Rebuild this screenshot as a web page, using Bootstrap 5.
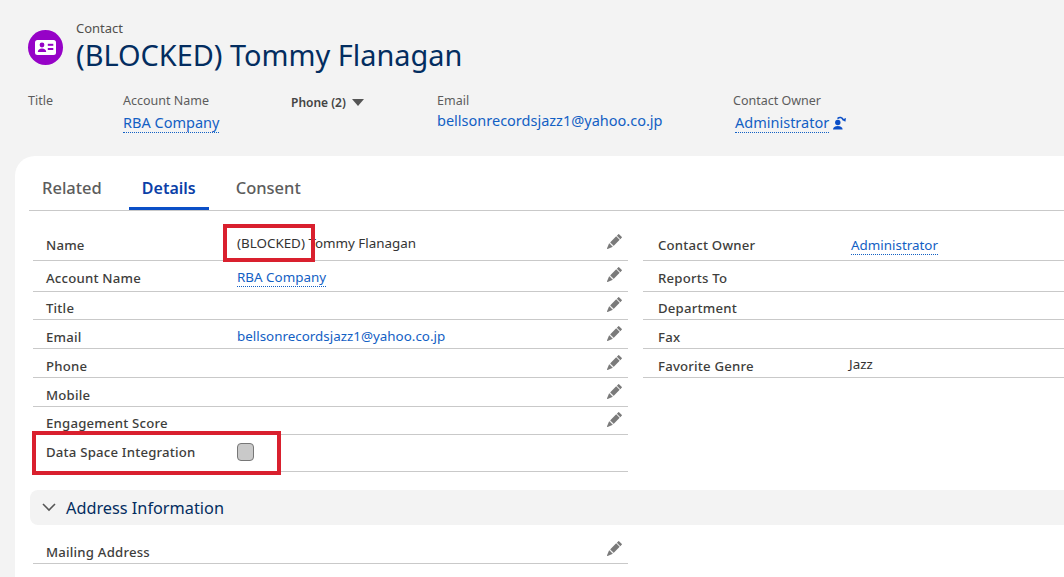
<!doctype html>
<html lang="en">
<head>
  <meta charset="utf-8">
  <meta name="viewport" content="width=device-width, initial-scale=1">
  <title>Contact | Tommy Flanagan</title>
  <link href="https://cdn.jsdelivr.net/npm/bootstrap@5.3.3/dist/css/bootstrap.min.css" rel="stylesheet">
  <style>
    html, body { height: 577px; overflow: hidden; }
    body {
      background: #f3f3f3;
      color: #444;
      font-family: "Noto Sans", "Open Sans", sans-serif;
      font-size: 13px;
      position: relative;
    }
    a.sf-link { color: #1260c4; text-decoration: none; }
    a.sf-dotted { border-bottom: 1px dotted #1260c4; }

    .page-head { padding: 20px 0 0 28px; height: 156px; }
    .obj-icon { width: 35px; height: 35px; background: #9602c7; margin-top: 10px; margin-right: 13px; }
    .obj-type { font-size: 13px; line-height: 17px; color: #514f4d; }
    .obj-title { font-size: 28.9px; line-height: 36px; color: #032d60; font-weight: 400; margin: 0; }

    .hl-row { margin-top: 20px; }
    .hl-label { font-size: 12.5px; line-height: 16px; color: #5c5c5c; }
    .hl-value { font-size: 14.5px; line-height: 20px; margin-top: 3px; }
    .hl-title { width: 95px; }
    .hl-acct { width: 168px; }
    .hl-phone { width: 146px; font-size: 12px; font-weight: 600; line-height: 20px; color: #444; }
    .hl-mail { width: 296px; }
    .hl-mail .hl-value { margin-top: 1px; }
    .hl-owner .hl-value { margin-left: 2px; margin-top: 3px; gap: 4px; }
    .caret-down { display: inline-block; border: 6px solid transparent; border-top: 7px solid #555; border-bottom: 0; margin-left: 3px; vertical-align: 1px; }

    .main-panel { background: #fff; margin-left: 15px; height: 421px; padding-left: 14px; border-top-left-radius: 20px; }
    .tab-bar { height: 55px; border-bottom: 1px solid #c9c9c9; gap: 14px; padding-top: 15px; }
    .tab-bar .nav-link { color: #5c5c5c; font-size: 16.5px; font-weight: 500; padding: 5px 13px 0; height: 39px; line-height: 24px; }
    .tab-bar .nav-link.active { color: #0b3fa8; border-bottom: 3px solid #0b4fc7; font-size: 16px; font-weight: 600; }

    .field-cols { margin-top: 15px; }
    .field-left { width: 595px; margin-left: 4px; }
    .field-right { width: 421px; margin-left: 15px; }
    .fld { border-bottom: 1px solid #c9c9c9; align-items: flex-end; padding-left: 13px; padding-bottom: 3px; height: 29px; }
    .fld-tall { height: 35px; padding-bottom: 7px; }
    .fld-mid { height: 31px; padding-bottom: 5px; }
    .fld-short { height: 28px; }
    .fld-end { height: 37px; padding-bottom: 11px; }
    .fld-addr { height: 39px; }
    .fld-label { width: 191px; font-size: 13.2px; font-weight: 500; line-height: 16px; color: #3e3e3c; flex: none; letter-spacing: .2px; }
    .field-right .fld { padding-left: 15px; }
    .field-right .fld-label { width: 193px; }
    .fld-value { line-height: 16px; margin-bottom: 1px; font-size: 13.4px; color: #333; }
    .fld-tall .fld-value { margin-bottom: 2px; }
    .field-right .fld-tall .fld-value { margin-bottom: 0; }
    .fld-jazz { margin-left: -2px; margin-bottom: 2px; }
    .pen { width: 15px; height: 15px; fill: #7a7a7a; margin-left: auto; margin-right: 6px; margin-bottom: 4px; flex: none; }
    .check-box { width: 17px; height: 18px; background: #c9c9c9; border: 1px solid #777; border-radius: 4px; margin-bottom: -1px; }

    .section-bar { background: #f3f3f3; height: 35px; margin: 18px 0 0 1px; border-radius: 8px 0 0 8px; padding-left: 12px; }
    .section-bar span { font-size: 16.3px; color: #032d60; margin-left: 10px; margin-top: 1px; }

    .red-box { position: absolute; border: 4px solid #d9202e; }
    .red-name { left: 223px; top: 224px; width: 92px; height: 38px; }
    .red-data { left: 32px; top: 431px; width: 249px; height: 44px; }
  </style>
</head>
<body>
  <svg width="0" height="0" class="position-absolute">
    <symbol id="pencil" viewBox="0 0 16 16">
      <path d="M12.854.146a.5.5 0 0 0-.707 0L10.500 1.793 14.207 5.500l1.647-1.646a.5.5 0 0 0 0-.708l-3-3zm.646 6.061L9.793 2.500 3.293 9H3.500a.5.5 0 0 1 .5.5v.5h.5a.5.5 0 0 1 .5.5v.5h.5a.5.5 0 0 1 .5.5v.5h.5a.5.5 0 0 1 .5.5v.207l6.500-6.500zm-7.468 7.468A.5.5 0 0 1 6 13.500V13h-.5a.5.5 0 0 1-.5-.5V12h-.5a.5.5 0 0 1-.5-.5V11h-.5a.5.5 0 0 1-.5-.5V10h-.5a.499.499 0 0 1-.175-.032l-.179.178a.5.5 0 0 0-.11.168l-2 5a.5.5 0 0 0 .65.65l5-2a.5.5 0 0 0 .168-.11l.178-.178z"/>
    </symbol>
  </svg>

  <header class="page-head">
    <div class="d-flex">
      <div class="obj-icon rounded-circle d-flex align-items-center justify-content-center flex-shrink-0">
        <svg width="21" height="15" viewBox="0 0 21 15">
          <rect width="21" height="15" rx="2.5" fill="#fff"/>
          <circle cx="7" cy="5" r="2.4" fill="#9602c7"/>
          <path d="M2.800 12c0-2.400 1.800-3.600 4.200-3.600s4.200 1.200 4.200 3.600z" fill="#9602c7"/>
          <rect x="12.800" y="3.800" width="5.500" height="2" fill="#9602c7"/>
          <rect x="12.800" y="8" width="5.500" height="2" fill="#9602c7"/>
        </svg>
      </div>
      <div>
        <div class="obj-type">Contact</div>
        <h1 class="obj-title">(BLOCKED) Tommy Flanagan</h1>
      </div>
    </div>
    <div class="hl-row d-flex">
      <div class="hl-title"><div class="hl-label">Title</div></div>
      <div class="hl-acct">
        <div class="hl-label">Account Name</div>
        <div class="hl-value"><a class="sf-link sf-dotted" href="#">RBA Company</a></div>
      </div>
      <div class="hl-phone">Phone (2) <span class="caret-down"></span></div>
      <div class="hl-mail">
        <div class="hl-label">Email</div>
        <div class="hl-value"><a class="sf-link" href="#">bellsonrecordsjazz1@yahoo.co.jp</a></div>
      </div>
      <div class="hl-owner">
        <div class="hl-label">Contact Owner</div>
        <div class="hl-value d-flex align-items-center">
          <a class="sf-link sf-dotted" href="#">Administrator</a>
          <svg width="13" height="14" viewBox="0 0 13 14">
            <circle cx="4.800" cy="6.500" r="2.700" fill="#0b4fc7"/>
            <path d="M0 13.500c0-2.300 2-3.500 4.800-3.500s4.800 1.200 4.800 3.500z" fill="#0b4fc7"/>
            <path d="M4.500 2.600C6.500.8 9.200 1.200 10.500 4" fill="none" stroke="#0b4fc7" stroke-width="1.500"/>
            <path d="M8.600 3.800l3.800 2 .6-3.800z" fill="#0b4fc7"/>
          </svg>
        </div>
      </div>
    </div>
  </header>

  <main class="main-panel">
    <ul class="nav tab-bar">
      <li class="nav-item"><a class="nav-link" href="#">Related</a></li>
      <li class="nav-item"><a class="nav-link active" href="#">Details</a></li>
      <li class="nav-item"><a class="nav-link" href="#">Consent</a></li>
    </ul>

    <div class="field-cols d-flex">
      <div class="field-left">
        <div class="fld fld-tall d-flex"><div class="fld-label">Name</div><div class="fld-value">(BLOCKED) Tommy Flanagan</div><svg class="pen"><use href="#pencil"/></svg></div>
        <div class="fld fld-mid d-flex"><div class="fld-label">Account Name</div><div class="fld-value"><a class="sf-link sf-dotted" href="#">RBA Company</a></div><svg class="pen"><use href="#pencil"/></svg></div>
        <div class="fld fld-short d-flex"><div class="fld-label">Title</div><svg class="pen"><use href="#pencil"/></svg></div>
        <div class="fld d-flex"><div class="fld-label">Email</div><div class="fld-value"><a class="sf-link" href="#">bellsonrecordsjazz1@yahoo.co.jp</a></div><svg class="pen"><use href="#pencil"/></svg></div>
        <div class="fld d-flex"><div class="fld-label">Phone</div><svg class="pen"><use href="#pencil"/></svg></div>
        <div class="fld d-flex"><div class="fld-label">Mobile</div><svg class="pen"><use href="#pencil"/></svg></div>
        <div class="fld fld-short d-flex"><div class="fld-label">Engagement Score</div><svg class="pen"><use href="#pencil"/></svg></div>
        <div class="fld fld-end d-flex"><div class="fld-label">Data Space Integration</div><div class="check-box"></div></div>
      </div>
      <div class="field-right">
        <div class="fld fld-tall d-flex"><div class="fld-label">Contact Owner</div><div class="fld-value"><a class="sf-link sf-dotted" href="#">Administrator</a></div></div>
        <div class="fld fld-mid d-flex"><div class="fld-label">Reports To</div></div>
        <div class="fld fld-short d-flex"><div class="fld-label">Department</div></div>
        <div class="fld d-flex"><div class="fld-label">Fax</div></div>
        <div class="fld d-flex"><div class="fld-label">Favorite Genre</div><div class="fld-value fld-jazz">Jazz</div></div>
      </div>
    </div>

    <div class="section-bar d-flex align-items-center">
      <svg width="14" height="9" viewBox="0 0 14 9"><path d="M1 1l6 6 6-6" fill="none" stroke="#555" stroke-width="1.600"/></svg>
      <span>Address Information</span>
    </div>
    <div class="field-left">
      <div class="fld fld-addr d-flex"><div class="fld-label">Mailing Address</div><svg class="pen"><use href="#pencil"/></svg></div>
    </div>
  </main>

  <div class="red-box red-name"></div>
  <div class="red-box red-data"></div>

  <script src="https://cdn.jsdelivr.net/npm/bootstrap@5.3.3/dist/js/bootstrap.bundle.min.js"></script>
</body>
</html>
